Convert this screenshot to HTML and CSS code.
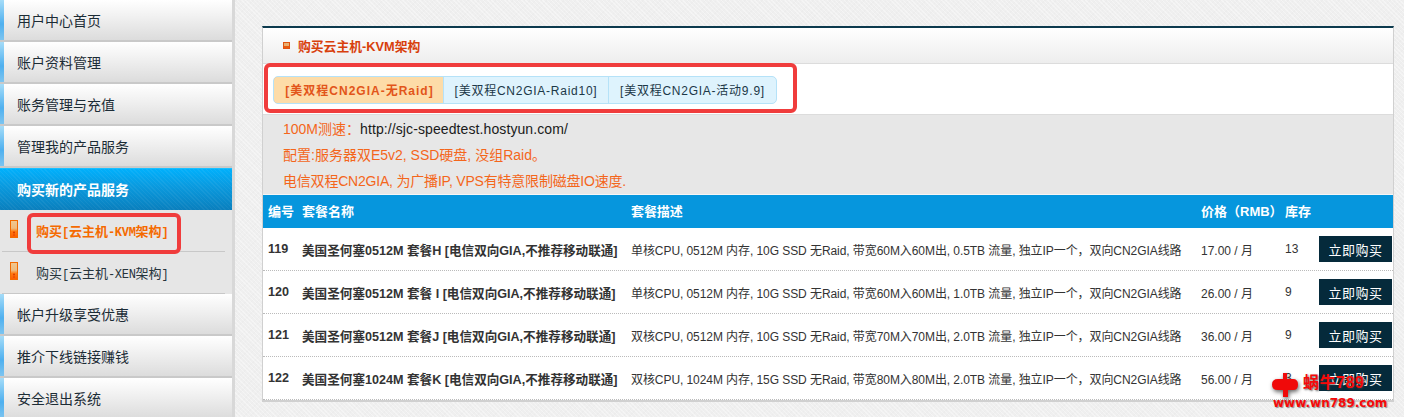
FILE: index.html
```html
<!DOCTYPE html>
<html lang="zh-CN">
<head>
<meta charset="utf-8">
<title>购买云主机</title>
<link rel="stylesheet" href="styles.css">
</head>
<body>
<div class="page">
  <aside class="sidebar">
    <a class="menu-item">用户中心首页</a>
    <a class="menu-item">账户资料管理</a>
    <a class="menu-item">账务管理与充值</a>
    <a class="menu-item">管理我的产品服务</a>
    <a class="menu-item active">购买新的产品服务</a>
    <div class="submenu">
      <a class="sub-item current">
        <svg class="sub-icon" width="8" height="18" viewBox="0 0 8 18"><defs><linearGradient id="g1" x1="0" y1="0" x2="0" y2="1"><stop offset="0" stop-color="#f0c890"/><stop offset=".45" stop-color="#eebc80"/><stop offset=".65" stop-color="#ff7a10"/><stop offset="1" stop-color="#ff5a00"/></linearGradient></defs><rect x=".500" y=".500" width="7" height="17" fill="url(#g1)" stroke="#f26a00"/><circle cx="4" cy="12.500" r="1" fill="#d83a00"/><circle cx="4" cy="15" r=".800" fill="#d83a00"/></svg>
        <span>购买<i class="half">[</i>云主机<i class="half">-KVM</i>架构<i class="half">]</i></span>
      </a>
      <a class="sub-item">
        <svg class="sub-icon" width="8" height="18" viewBox="0 0 8 18"><rect x=".500" y=".500" width="7" height="17" fill="url(#g1)" stroke="#f26a00"/><circle cx="4" cy="12.500" r="1" fill="#d83a00"/><circle cx="4" cy="15" r=".800" fill="#d83a00"/></svg>
        <span>购买<i class="half">[</i>云主机<i class="half">-XEN</i>架构<i class="half">]</i></span>
      </a>
    </div>
    <a class="menu-item">帐户升级享受优惠</a>
    <a class="menu-item">推介下线链接赚钱</a>
    <a class="menu-item">安全退出系统</a>
    <div class="mark mark-side"></div>
  </aside>

  <main class="panel">
    <header class="panel-head">
      <span class="bullet"></span>
      <h1>购买云主机-KVM架构</h1>
    </header>
    <nav class="tabs-row">
      <div class="tabs">
        <a class="tab on">[美双程CN2GIA-无Raid]</a>
        <a class="tab t2">[美双程CN2GIA-Raid10]</a>
        <a class="tab t3">[美双程CN2GIA-活动9.9]</a>
      </div>
    </nav>
    <section class="notes">
      <p>100M测速：<a>http://sjc-speedtest.hostyun.com/</a></p>
      <p>配置:服务器双E5v2, SSD硬盘, 没组Raid。</p>
      <p class="tight">电信双程CN2GIA, 为广播IP, VPS有特意限制磁盘IO速度.</p>
    </section>
    <div class="table">
      <div class="row head">
        <span>编号</span><span>套餐名称</span><span>套餐描述</span><span>价格（RMB）</span><span>库存</span><span></span>
      </div>
      <div class="row">
        <b>119</b><b>美国圣何塞0512M 套餐H [电信双向GIA,不推荐移动联通]</b>
        <span>单核CPU, 0512M 内存, 10G SSD 无Raid, 带宽60M入60M出, 0.5TB 流量, 独立IP一个，双向CN2GIA线路</span>
        <span>17.00 / 月</span><span>13</span><a class="buy">立即购买</a>
      </div>
      <div class="row">
        <b>120</b><b>美国圣何塞0512M 套餐 I [电信双向GIA,不推荐移动联通]</b>
        <span>单核CPU, 0512M 内存, 10G SSD 无Raid, 带宽60M入60M出, 1.0TB 流量, 独立IP一个，双向CN2GIA线路</span>
        <span>26.00 / 月</span><span>9</span><a class="buy">立即购买</a>
      </div>
      <div class="row">
        <b>121</b><b>美国圣何塞0512M 套餐J [电信双向GIA,不推荐移动联通]</b>
        <span>双核CPU, 0512M 内存, 10G SSD 无Raid, 带宽70M入70M出, 2.0TB 流量, 独立IP一个，双向CN2GIA线路</span>
        <span>36.00 / 月</span><span>9</span><a class="buy">立即购买</a>
      </div>
      <div class="row">
        <b>122</b><b>美国圣何塞1024M 套餐K [电信双向GIA,不推荐移动联通]</b>
        <span>双核CPU, 1024M 内存, 15G SSD 无Raid, 带宽80M入80M出, 2.0TB 流量, 独立IP一个，双向CN2GIA线路</span>
        <span>56.00 / 月</span><span>3</span><a class="buy">立即购买</a>
      </div>
    </div>
    <div class="mark mark-tabs"></div>
  </main>
</div>
<div class="watermark">
  <svg class="wm-logo" width="26" height="24" viewBox="0 0 26 24"><path d="M11 0h4v6h6q5 0 5 5.500t-5 5.500h-5v7h-5v-7H6q-6 0-6-5.500t6-5.500h5z" fill="#f00a0a"/></svg>
  <div class="wm-text">
    <div class="wm-top">蜗牛789</div>
    <div class="wm-url">www.wn789.com</div>
  </div>
</div>
</body>
</html>
```

FILE: styles.css
```css
* { box-sizing: border-box; }
html, body { margin: 0; padding: 0; height: 417px; overflow: hidden; }
body {
  position: relative;
  background-color: #efefef;
  background-image:
    repeating-linear-gradient(45deg, rgba(255,255,255,.35) 0 1px, transparent 1px 3px),
    repeating-linear-gradient(-45deg, rgba(0,0,0,.012) 0 1px, transparent 1px 4px);
  font-family: "Liberation Sans", "Noto Sans CJK SC", sans-serif;
  color: #333;
}
a { text-decoration: none; color: inherit; }
i { font-style: normal; }
.page { display: flex; align-items: flex-start; }

.sidebar {
  position: relative;
  flex: none;
  width: 235px;
  border-right: 3px solid #d8d8d8;
  background: #e6e6e6;
}
.menu-item {
  display: flex;
  align-items: center;
  height: 42px;
  padding-left: 17px;
  font-size: 14px;
  color: #1c2c36;
  background:
    linear-gradient(#a5dcf8, #4fb0ef 60%, #7cc4f0) left top / 4px 100% no-repeat,
    linear-gradient(#ffffff, #f3f3f3 35%, #dcdcdc 100%);
  border-bottom: 2px solid #c9c9c9;
}
.menu-item.active {
  color: #fff;
  font-weight: bold;
  padding-bottom: 2px;
  background:
    repeating-linear-gradient(45deg, rgba(255,255,255,.05) 0 1px, transparent 1px 3px),
    linear-gradient(#00b0fc, #0a9be0 40%, #0a7fbd);
  border-bottom: 0;
  border-top: 1px solid #19c0ff;
}
.submenu { display: flex; flex-direction: column; background: #e6e6e6; padding-left: 2px; padding-right: 7px; }
.sub-item {
  display: flex;
  align-items: center;
  height: 42px;
  padding: 0 0 0 8px;
  font-size: 13px;
  color: #26343c;
  border-bottom: 1px solid #c8c8c8;
}
.sub-item.current { color: #f56a00; font-weight: bold; }
.sub-icon { flex: none; margin-right: 18px; margin-top: -4px; }
.half { font-family: "Liberation Mono", monospace; font-size: 12px; letter-spacing: -.3px; }

.panel {
  position: relative;
  flex: none;
  width: 1132px;
  margin: 26px 0 0 27px;
  border-top: 2px solid #0c3a4e;
  border-left: 1px solid #d0d0d0;
  border-right: 1px solid #d0d0d0;
  border-bottom: 2px solid #d0d0d0;
  background: #fff;
}
.panel-head {
  display: flex;
  align-items: center;
  height: 36px;
  padding-left: 20px;
  background: linear-gradient(#ffffff, #ededed);
  border-bottom: 1px solid #dcdcdc;
}
.bullet {
  width: 7px; height: 7px; margin-right: 8px;
  background: linear-gradient(#e8b070 0 50%, #e85a10 50%);
  border: 1px solid #e05410;
}
h1 { margin: 0; font-size: 12.800px; font-weight: bold; color: #d8400c; }

.tabs-row { height: 51px; padding: 12px 0 0 10px; background: #fff; border-bottom: 1px solid #dcdcdc; }
.tabs {
  display: inline-flex;
  height: 28px;
  border: 1px solid #b5e2f8;
  border-radius: 5px;
  background: #def3fd;
  font-size: 12px;
  letter-spacing: .75px;
  overflow: hidden;
}
.tab {
  display: flex; align-items: center; justify-content: center;
  width: 165px;
  padding-bottom: 1px;
  color: #1c3848;
  border-left: 1px solid #b5e2f8;
}
.tab.on {
  width: 170px; margin: -1px 0 -1px -1px;
  border: 1px solid #f7b565; border-right: 0; border-radius: 5px 0 0 5px;
  background: #fddca8; color: #e2551a; font-weight: bold;
  letter-spacing: 1px;
  padding-left: 2px;
}
.tab.t3 { width: 168px; }

.notes {
  height: 80px;
  padding: 1px 0 0 20px;
  background: #e7e7e7;
  border-bottom: 1px solid #f6f6f6;
  font-size: 14px;
  line-height: 26px;
  color: #f4661b;
}
.notes p { margin: 0; }
.notes a { color: #1a1a1a; letter-spacing: .1px; }
.notes .tight { letter-spacing: -.2px; }

.table { display: flex; flex-direction: column; }
.row {
  display: grid;
  grid-template-columns: 34px 329px 570px 84px 34px 73px;
  align-items: center;
  height: 43px;
  padding-left: 5px;
  font-size: 12px;
  color: #333;
  border-bottom: 1px dotted #bbb;
  white-space: nowrap;
}
.row > span:nth-child(3) { letter-spacing: -.07px; }
.row b { font-size: 12.600px; }
.row.head {
  height: 33px;
  padding-bottom: 2px;
  background: #0696dd;
  color: #fff;
  font-weight: bold;
  font-size: 13px;
  border-bottom: 0;
}
.buy {
  display: flex; align-items: center; justify-content: center;
  height: 26px;
  background: #052a3b;
  color: #fff;
  font-size: 13px;
  letter-spacing: .5px;
}

.mark { position: absolute; border: 4px solid #f03c3c; border-radius: 6px; pointer-events: none; }
.mark-side { left: 27px; top: 213px; width: 154px; height: 41px; }
.mark-tabs { left: 1px; top: 35px; width: 533px; height: 50px; }

.watermark {
  position: absolute;
  left: 1272px; top: 372px;
  display: flex;
  align-items: flex-start;
  pointer-events: none;
  width: 132px;
  height: 45px;
}
.wm-logo { flex: none; margin-top: 1px; filter: drop-shadow(1px 2px 2px rgba(60,60,60,.8)); }
.wm-text { flex: none; }
.wm-top { margin-left: 5px; font-size: 16px; line-height: 22px; font-weight: bold; color: #f50a0a; letter-spacing: .5px; text-shadow: 1px 1px 2px rgba(60,60,60,.8); white-space: nowrap; }
.wm-url { margin-left: -25px; font-size: 12px; line-height: 18px; font-weight: bold; color: #f50a0a; font-family: "DejaVu Sans", sans-serif; text-shadow: 1px 1px 1px rgba(80,80,80,.6); white-space: nowrap; }
```
